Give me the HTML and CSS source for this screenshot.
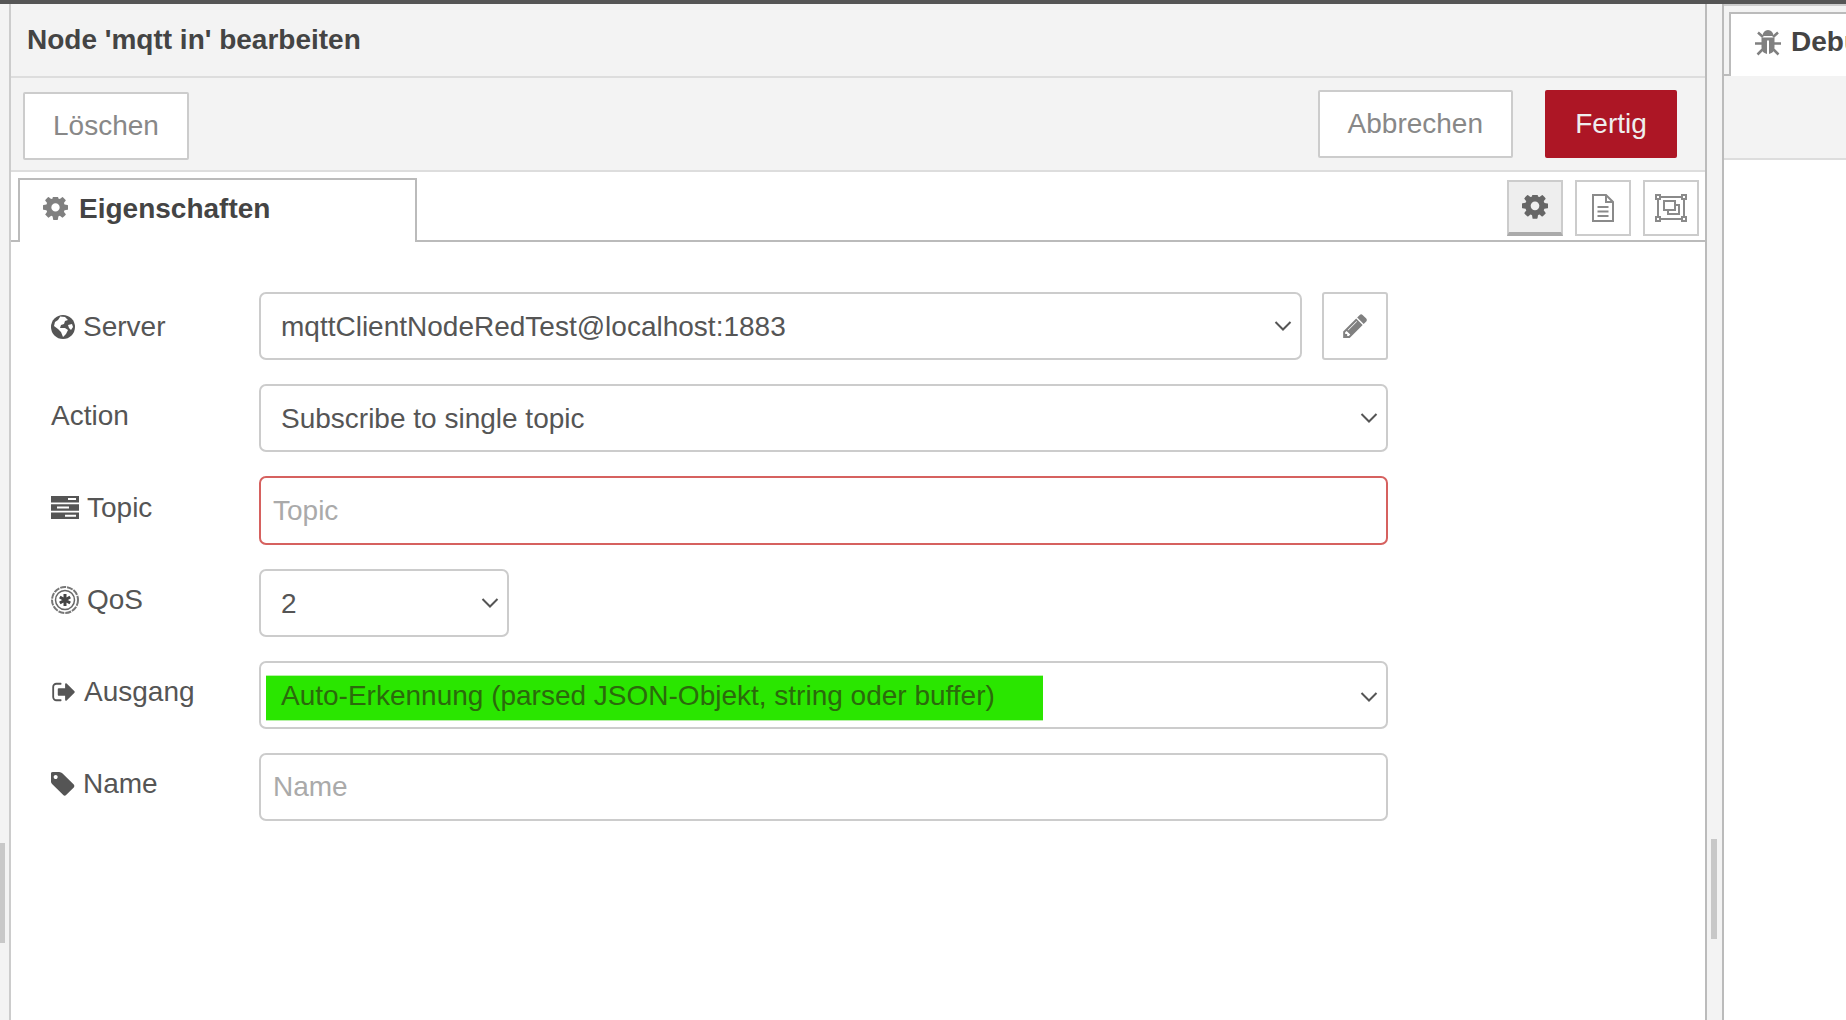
FILE: index.html
```html
<!DOCTYPE html>
<html lang="de">
<head>
<meta charset="utf-8">
<title>Node 'mqtt in' bearbeiten</title>
<link rel="stylesheet" href="styles.css">
</head>
<body>
<svg class="defs" aria-hidden="true">
  <symbol id="i-cog" viewBox="0 0 1536 1536"><path d="M1024 640q0-106-75-181t-181-75-181 75-75 181 75 181 181 75 181-75 75-181zm512-109v222q0 12-8 23t-20 13l-185 28q-19 54-39 91 35 50 107 138 10 12 10 25t-9 23q-27 37-99 108t-94 71q-12 0-26-9l-138-108q-44 23-91 38-16 136-29 186-7 28-36 28h-222q-14 0-24.5-8.5t-11.5-21.5l-28-184q-49-16-90-37l-141 107q-10 9-25 9-14 0-25-11-126-114-165-168-7-10-7-23 0-12 8-23 15-21 51-66.5t54-70.5q-27-50-41-99l-183-27q-13-2-21-12.5t-8-23.5v-222q0-12 8-23t19-13l186-28q14-46 39-92-40-57-107-138-10-12-10-24 0-10 9-23 26-36 98.5-107.5t94.5-71.5q13 0 26 10l138 107q44-23 91-38 16-136 29-186 7-28 36-28h222q14 0 24.5 8.5t11.5 21.5l28 184q49 16 90 37l142-107q9-9 24-9 13 0 25 10 129 119 165 170 7 8 7 22 0 12-8 23-15 21-51 66.5t-54 70.5q26 50 41 98l183 28q13 2 21 12.5t8 23.5z"/></symbol>
  <symbol id="i-chevron" viewBox="0 0 18 12"><path d="M1.5 2 9 9.5 16.5 2" fill="none" stroke="currentColor" stroke-width="2"/></symbol>
</svg>

<div class="topbar"></div>
<div class="workspace">
  <div class="left-strip"><div class="scroll-thumb"></div></div>

  <main class="editor">
    <header class="editor-title">Node 'mqtt in' bearbeiten</header>
    <div class="editor-actions">
      <button class="btn btn-delete">Löschen</button>
      <div class="actions-right">
        <button class="btn">Abbrechen</button>
        <button class="btn btn-primary">Fertig</button>
      </div>
    </div>
    <div class="tabs">
      <div class="tab">
        <svg class="tab-icon"><use href="#i-cog"/></svg>
        <span>Eigenschaften</span>
      </div>
      <div class="tab-tools">
        <button class="tool tool-active"><svg class="tool-cog"><use href="#i-cog"/></svg></button>
        <button class="tool">
          <svg class="tool-svg" viewBox="0 0 24 28"><path d="M2 1h13l7 7v19H2zM15 1v7h7M6.500 13h11M6.500 17.500h11M6.500 22h11" fill="none" stroke="#8a8a8a" stroke-width="2"/></svg>
        </button>
        <button class="tool">
          <svg class="tool-svg tool-svg-wide" viewBox="0 0 32 28"><g fill="none" stroke="#8a8a8a" stroke-width="2"><rect x="3" y="3" width="26" height="22"/><rect x="9" y="7" width="11" height="9"/><path d="M20 11h4v9H13v-4"/></g><g fill="#fff" stroke="#8a8a8a" stroke-width="2"><rect x="1" y="1" width="4" height="4"/><rect x="27" y="1" width="4" height="4"/><rect x="1" y="23" width="4" height="4"/><rect x="27" y="23" width="4" height="4"/></g></svg>
        </button>
      </div>
    </div>

    <form class="form">
      <div class="row">
        <label class="label label-server">
          <svg class="ico ico-globe" viewBox="0 0 24 24"><circle cx="12" cy="12" r="12" fill="#555"/><path d="M9 1.500l5 .5 3 3-3 1-1 3-3 1-1 3h5l3 2-2 4-3 3-2-5-3-3-4-3 1-4 3-2 2-3zM17 10l4-1 1 3-2 3-2-2z" fill="#fff"/></svg>
          Server
        </label>
        <div class="select select-server">
          <span>mqttClientNodeRedTest@localhost:1883</span>
          <svg class="chev"><use href="#i-chevron"/></svg>
        </div>
        <button class="edit-btn" type="button">
          <svg class="pencil" viewBox="0 128 1515 1536"><path d="M363 1536l91-91-235-235-91 91v107h128v128h107zm523-928q0-22-22-22-10 0-17 7l-542 542q-7 7-7 17 0 22 22 22 10 0 17-7l542-542q7-7 7-17zm-54-192l416 416-832 832h-416v-416zm683 96q0 53-37 90l-166 166-416-416 166-165q36-38 90-38 53 0 91 38l235 234q37 39 37 91z"/></svg>
        </button>
      </div>
      <div class="row">
        <label class="label">Action</label>
        <div class="select select-wide">
          <span>Subscribe to single topic</span>
          <svg class="chev"><use href="#i-chevron"/></svg>
        </div>
      </div>
      <div class="row">
        <label class="label">
          <svg class="ico ico-tasks" viewBox="0 0 28 23"><rect width="28" height="6.500" fill="#555"/><rect y="8.250" width="28" height="6.500" fill="#555"/><rect y="16.500" width="28" height="6.500" fill="#555"/><rect x="17" y="2" width="8" height="2" fill="#fff"/><rect x="6" y="10.500" width="12" height="2" fill="#fff"/><rect x="14" y="18.750" width="11" height="2" fill="#fff"/></svg>
          Topic
        </label>
        <input class="input input-invalid" type="text" placeholder="Topic">
      </div>
      <div class="row">
        <label class="label">
          <svg class="ico ico-empire" viewBox="0 0 28 28"><circle cx="14" cy="14" r="13" fill="none" stroke="#777" stroke-width="2" stroke-dasharray="6 1"/><circle cx="14" cy="14" r="9.500" fill="none" stroke="#666" stroke-width="1.500"/><path d="M14 8v12M8.800 11l10.400 6M19.200 11 8.800 17" stroke="#444" stroke-width="3"/></svg>
          QoS
        </label>
        <div class="select select-qos">
          <span>2</span>
          <svg class="chev"><use href="#i-chevron"/></svg>
        </div>
      </div>
      <div class="row">
        <label class="label">
          <svg class="ico ico-signout" viewBox="0 128 1568 1536"><path d="M640 1440q0 4 1 20t.5 26.500-3 23.500-10 19.500-20.500 6.500h-320q-119 0-203.500-84.500t-84.500-203.500v-704q0-119 84.500-203.500t203.500-84.500h320q13 0 22.500 9.500t9.500 22.500q0 4 1 20t.5 26.500-3 23.500-10 19.500-20.500 6.500h-320q-66 0-113 47t-47 113v704q0 66 47 113t113 47h312l11.500 1 11.500 3 8 5.500 7 9 2 13.500zm928-544q0 26-19 45l-544 544q-19 19-45 19t-45-19-19-45v-288h-448q-26 0-45-19t-19-45v-384q0-26 19-45t45-19h448v-288q0-26 19-45t45-19 45 19l544 544q19 19 19 45z"/></svg>
          Ausgang
        </label>
        <div class="select select-wide select-output">
          <span class="highlight">Auto-Erkennung (parsed JSON-Objekt, string oder buffer)</span>
          <svg class="chev"><use href="#i-chevron"/></svg>
        </div>
      </div>
      <div class="row">
        <label class="label">
          <svg class="ico ico-tag" viewBox="0 128 1451 1536"><path d="M384 448q0-53-37.500-90.500t-90.500-37.500-90.500 37.500-37.500 90.500 37.500 90.500 90.500 37.500 90.500-37.500 37.500-90.500zm1067 576q0 53-37 90l-491 492q-39 37-91 37-53 0-90-37l-715-716q-38-37-64.500-101t-26.500-117v-416q0-52 38-90t90-38h416q53 0 117 26.500t102 64.500l715 714q37 39 37 91z"/></svg>
          Name
        </label>
        <input class="input" type="text" placeholder="Name">
      </div>
    </form>
  </main>

  <div class="splitter"><div class="scroll-thumb scroll-thumb-right"></div></div>

  <aside class="sidebar">
    <div class="side-tabs">
      <div class="side-tab-stub"></div>
      <div class="side-tab">
        <svg class="bug" viewBox="0 0 26 28"><path d="M7.500 8a5.500 6 0 0 1 11 0zM6.500 9.500h13V19a7 7 0 0 1-5.500 7V12.500h-2V26a7 7 0 0 1-5.500-7z" fill="#808080"/><path d="M3 4.500l5 4.500M23 4.500l-5 4.500M0 15.500h7M26 15.500h-7M2.500 26.500l5-5M23.500 26.500l-5-5" stroke="#808080" stroke-width="2.500" fill="none"/></svg>
        <span>Debug</span>
      </div>
    </div>
    <div class="side-toolbar"></div>
    <div class="side-body"></div>
  </aside>
</div>
</body>
</html>
```

FILE: styles.css
```css
* { box-sizing: border-box; }

html, body {
  margin: 0;
  height: 100%;
  overflow: hidden;
}

body {
  display: flex;
  flex-direction: column;
  background: #fff;
  color: #555;
  font-family: "Liberation Sans", Arial, sans-serif;
  font-size: 28px;
}

.defs { display: none; }

.topbar {
  height: 4px;
  flex: none;
  background: #555;
}

.workspace {
  flex: 1;
  display: flex;
  min-height: 0;
}

.left-strip {
  width: 9px;
  flex: none;
  background: #f3f3f3;
  padding-top: 839px;
}

.scroll-thumb {
  width: 5px;
  height: 100px;
  background: #c8c8c8;
}

.editor {
  width: 698px;
  flex: 1;
  display: flex;
  flex-direction: column;
  border-left: 2px solid #ccc;
  border-right: 2px solid #bbb;
  background: #fff;
  min-width: 0;
}

.editor-title {
  height: 74px;
  flex: none;
  display: flex;
  align-items: center;
  padding-left: 16px;
  padding-bottom: 1px;
  background: #f3f3f3;
  border-bottom: 2px solid #ddd;
  color: #444;
  font-weight: bold;
}

.editor-actions {
  height: 94px;
  flex: none;
  display: flex;
  justify-content: space-between;
  padding: 12px 28px 0 12px;
  background: #f3f3f3;
  border-bottom: 2px solid #ddd;
}

.btn-delete {
  margin-top: 2px;
}

.actions-right {
  display: flex;
  gap: 32px;
}

.btn {
  height: 68px;
  padding: 0 28px;
  background: #fff;
  border: 2px solid #ccc;
  border-radius: 2px;
  color: #888;
  font: inherit;
}

.btn-primary {
  width: 132px;
  padding: 0;
  background: #ad1625;
  border-color: #ad1625;
  color: #eee;
}

.tabs {
  height: 70px;
  flex: none;
  display: flex;
  justify-content: space-between;
  padding: 6px 6px 0 7px;
  border-bottom: 2px solid #bbb;
}

.tab {
  width: 399px;
  height: 64px;
  display: flex;
  align-items: center;
  gap: 11px;
  padding: 0 0 4px 23px;
  background: #fff;
  border: 2px solid #bbb;
  border-bottom: 0;
  color: #444;
  font-weight: bold;
}

.tab-icon {
  width: 25px;
  height: 25px;
  fill: #808080;
}

.tab-tools {
  display: flex;
  gap: 12px;
  padding-top: 2px;
}

.tool {
  width: 56px;
  height: 56px;
  padding: 0;
  display: flex;
  align-items: center;
  justify-content: center;
  background: #fff;
  border: 2px solid #ccc;
  border-radius: 0;
}

.tool-active {
  background: #eee;
  border-bottom: 4px solid #aaa;
}

.tool-cog {
  width: 26px;
  height: 26px;
  margin-top: 2px;
  fill: #666;
}

.tool-svg {
  width: 24px;
  height: 28px;
}

.tool-svg-wide {
  width: 32px;
}

.form {
  display: flex;
  flex-direction: column;
  gap: 24.2px;
  padding: 50px 0 0 40px;
}

.row {
  display: flex;
  height: 68px;
  gap: 20px;
}

.label {
  width: 208px;
  flex: none;
  margin-right: -20px;
  padding-right: 20px;
  display: flex;
  align-items: center;
  gap: 8px;
  padding-bottom: 5px;
  color: #555;
}

.label-server {
  padding-top: 2px;
  padding-bottom: 0;
}

.ico {
  flex: none;
  fill: #555;
}

.ico-globe { width: 24px; height: 24px; }
.ico-tasks { width: 28px; height: 23px; }
.ico-empire { width: 28px; height: 28px; }
.ico-signout { width: 25px; height: 22px; }
.ico-tag { width: 24px; height: 24px; }

.select,
.input {
  height: 68px;
  background: #fff;
  border: 2px solid #ccc;
  border-radius: 7px;
  color: #555;
  font: inherit;
}

.select {
  display: flex;
  align-items: center;
  justify-content: space-between;
  padding: 2px 8px 0 20px;
}

.select-server { width: 1043px; }
.select-wide { width: 1129px; }
.select-qos { width: 250px; }
.select-output { padding: 6px 8px 0 5px; }

.chev {
  width: 18px;
  height: 12px;
  flex: none;
  margin-top: -2px;
  color: #555;
}

.highlight {
  width: 777px;
  height: 44px;
  display: flex;
  align-items: center;
  padding: 0 0 3px 15px;
  background: #2ae600;
  box-shadow: 0 -1px #b5f3a5, 0 1px #b5f3a5;
  color: #2b6a0c;
}

.input {
  width: 1129px;
  padding: 0 12px;
}

.input::placeholder {
  color: #aaa;
  opacity: 1;
}

.input-invalid {
  height: 69px;
  border-color: #d6615f;
}

.edit-btn {
  width: 66px;
  height: 68px;
  padding: 0;
  display: flex;
  align-items: center;
  justify-content: center;
  background: #fff;
  border: 2px solid #ccc;
  border-radius: 3px;
}

.pencil {
  width: 24px;
  height: 24px;
  fill: #808080;
}

.splitter {
  width: 15px;
  flex: none;
  background: #f3f3f3;
  padding: 835px 0 0 4px;
}

.scroll-thumb-right {
  width: 6px;
}

.sidebar {
  width: 124px;
  flex: none;
  display: flex;
  flex-direction: column;
  border-left: 2px solid #bbb;
  overflow: hidden;
}

.side-tabs {
  height: 72px;
  flex: none;
  display: flex;
  align-items: flex-end;
  padding-top: 6px;
  background: #f3f3f3;
  border-top: 2px solid #ccc;
}

.side-tab-stub {
  width: 5px;
  height: 2px;
  flex: none;
  background: #bbb;
}

.side-tab {
  width: 300px;
  height: 64px;
  flex: none;
  display: flex;
  align-items: center;
  gap: 10px;
  padding: 0 0 6px 24px;
  background: #fff;
  border: 2px solid #bbb;
  border-bottom: 0;
  color: #444;
  font-weight: bold;
}

.bug {
  width: 26px;
  height: 28px;
  flex: none;
}

.side-toolbar {
  height: 84px;
  flex: none;
  background: #f3f3f3;
  border-bottom: 2px solid #ddd;
}

.side-body {
  flex: 1;
  background: #fff;
}
```
